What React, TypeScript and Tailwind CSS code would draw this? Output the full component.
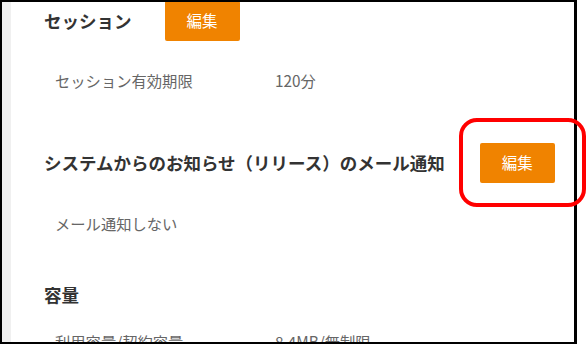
const font = { fontFamily: '"Noto Sans CJK JP", "Noto Sans", sans-serif' }

function EditButton() {
  return (
    <button className="w-[75px] h-10 shrink-0 bg-[#f08300] rounded-[2px] text-white text-[15.5px] flex items-center justify-center">
      編集
    </button>
  )
}

function Row({ label, value }: { label: string; value?: string }) {
  return (
    <div className="flex items-center h-6 pl-[11px] text-[15.3px] text-[#666]">
      <span className="w-[220px] shrink-0">{label}</span>
      {value && <span>{value}</span>}
    </div>
  )
}

export default function App() {
  return (
    <div className="relative w-[587px] h-[344px] bg-white" style={font}>
      <div className="w-[577px] h-[344px] border-2 border-r-[3px] border-black overflow-hidden flex">
        {/* left strip */}
        <div className="w-[9px] shrink-0 bg-[#f0f0f0]" />

        <div className="flex-1 pl-[33px]">
          {/* セッション */}
          <div className="flex items-center gap-[33px] h-10 -mt-[1px]">
            <h2 className="text-[17.5px] font-bold text-[#333]">セッション</h2>
            <EditButton />
          </div>
          <div className="mt-[27px]">
            <Row label="セッション有効期限" value="120分" />
          </div>

          {/* お知らせ */}
          <div className="flex items-center gap-[35px] h-10 mt-[51px]">
            <h2 className="text-[17.5px] font-bold text-[#333] whitespace-nowrap">
              システムからのお知らせ（リリース）のメール通知
            </h2>
            <EditButton />
          </div>
          <div className="mt-[28px]">
            <Row label="メール通知しない" />
          </div>

          {/* 容量 */}
          <div className="flex items-center h-6 mt-[48px]">
            <h2 className="text-[17.5px] font-bold text-[#333]">容量</h2>
          </div>
          <div className="mt-[22px]">
            <Row label="利用容量/契約容量" value="8.4MB/無制限" />
          </div>
        </div>
      </div>

      {/* highlight */}
      <div className="absolute left-[459px] top-[118px] w-[127px] h-[89px] border-4 border-[#ff0000] rounded-[18px]" />
    </div>
  )
}
